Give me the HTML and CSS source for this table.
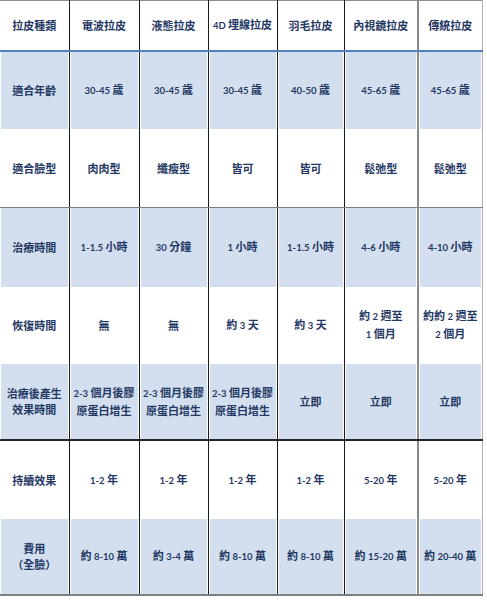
FILE: index.html
```html
<!DOCTYPE html>
<html lang="zh-Hant">
<head>
<meta charset="utf-8">
<link rel="stylesheet" href="styles.css">
</head>
<body>
<table class="grid">
  <colgroup>
    <col class="c1"><col class="c2"><col class="c3"><col class="c4"><col class="c5"><col class="c6"><col class="c7">
  </colgroup>
  <tr class="head">
    <td>拉皮種類</td><td>電波拉皮</td><td>液態拉皮</td><td><span class="n">4D</span> 埋線拉皮</td><td>羽毛拉皮</td><td>內視鏡拉皮</td><td>傳統拉皮</td>
  </tr>
  <tr class="blue r2">
    <td>適合年齡</td><td><span class="n">30-45</span> 歲</td><td><span class="n">30-45</span> 歲</td><td><span class="n">30-45</span> 歲</td><td><span class="n">40-50</span> 歲</td><td><span class="n">45-65</span> 歲</td><td><span class="n">45-65</span> 歲</td>
  </tr>
  <tr class="white r3">
    <td>適合臉型</td><td>肉肉型</td><td>纖瘦型</td><td>皆可</td><td>皆可</td><td>鬆弛型</td><td>鬆弛型</td>
  </tr>
  <tr class="blue r4">
    <td>治療時間</td><td><span class="n">1-1.5</span> 小時</td><td><span class="n">30</span> 分鐘</td><td><span class="n">1</span> 小時</td><td><span class="n">1-1.5</span> 小時</td><td><span class="n">4-6</span> 小時</td><td><span class="n">4-10</span> 小時</td>
  </tr>
  <tr class="white r5">
    <td>恢復時間</td><td>無</td><td>無</td><td>約 <span class="n">3</span> 天</td><td>約 <span class="n">3</span> 天</td><td>約 <span class="n">2</span> 週至<br><span class="n">1</span> 個月</td><td>約約 <span class="n">2</span> 週至<br><span class="n">2</span> 個月</td>
  </tr>
  <tr class="blue r6">
    <td>治療後產生<br>效果時間</td><td><span class="n">2-3</span> 個月後膠<br>原蛋白增生</td><td><span class="n">2-3</span> 個月後膠<br>原蛋白增生</td><td><span class="n">2-3</span> 個月後膠<br>原蛋白增生</td><td>立即</td><td>立即</td><td>立即</td>
  </tr>
  <tr class="white r7">
    <td>持續效果</td><td><span class="n">1-2</span> 年</td><td><span class="n">1-2</span> 年</td><td><span class="n">1-2</span> 年</td><td><span class="n">1-2</span> 年</td><td><span class="n">5-20</span> 年</td><td><span class="n">5-20</span> 年</td>
  </tr>
  <tr class="blue r8">
    <td>費用<br>（全臉）</td><td>約 <span class="n">8-10</span> 萬</td><td>約 <span class="n">3-4</span> 萬</td><td>約 <span class="n">8-10</span> 萬</td><td>約 <span class="n">8-10</span> 萬</td><td>約 <span class="n">15-20</span> 萬</td><td>約 <span class="n">20-40</span> 萬</td>
  </tr>
</table>
</body>
</html>
```

FILE: styles.css
```css
html, body {
  margin: 0;
  padding: 0;
  background: #ffffff;
}

.grid {
  border-collapse: collapse;
  table-layout: fixed;
  width: 482px;
  font-family: "Noto Sans CJK TC", "Noto Sans CJK SC", sans-serif;
  font-weight: 700;
  font-size: 11px;
  line-height: 16px;
  color: #1f3864;
  border-top: 1px solid #8c8c8c;
  border-bottom: 2px solid #7f7f7f;
}

.c1 { width: 69px; }
.c2 { width: 70px; }
.c3 { width: 69px; }
.c4 { width: 69px; }
.c5 { width: 67px; }
.c6 { width: 74px; }
.c7 { width: 64px; }

.grid td {
  padding: 0 2px;
  text-align: center;
  vertical-align: middle;
  border-left: 1px solid #1a1a1a;
  border-right: 1px solid #1a1a1a;
}

.grid td:first-child {
  border-left: none;
}

.grid td:nth-child(6) {
  border-right: 2px solid #8a8a8a;
}

.grid td:last-child {
  border-right: 1px solid #b0b0b0;
}

.n {
  font-family: "Lato", "Liberation Sans", sans-serif;
  font-size: 9.5px;
  font-weight: 700;
}

.head { height: 50px; }
.head td { border-bottom: 2px solid #4f81bd; }

.blue td {
  background: #d3dfee;
  box-shadow: inset 1px 0 #ffffff, inset -1px 0 #ffffff;
}

.white td { background: #ffffff; }

.r2 { height: 78px; }
.r3 { height: 79px; }
.r3 td { border-bottom: 1px solid #7f7f7f; }
.r4 { height: 79px; }
.r5 { height: 77px; }
.r6 { height: 76px; }
.r6 td { border-bottom: 2px solid #262626; }
.r7 { height: 79px; }
.r8 { height: 76px; }
```
